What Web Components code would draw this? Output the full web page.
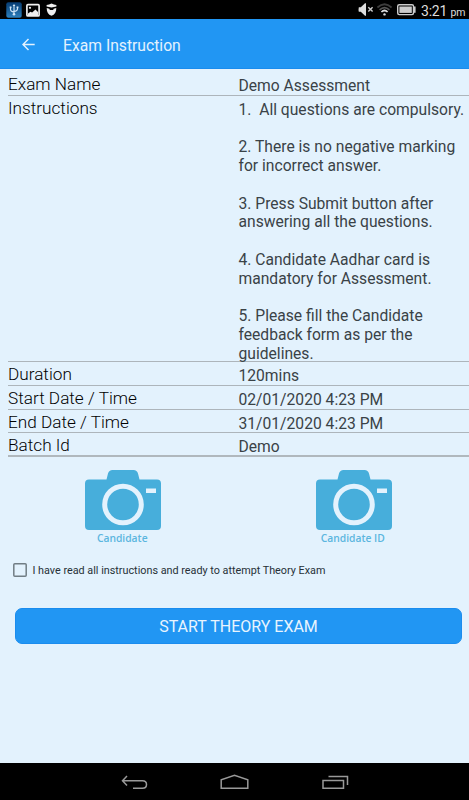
<!DOCTYPE html>
<html lang="en">
<head>
<meta charset="utf-8">
<title>Exam Instruction</title>
<style>
body {
  margin: 0;
  font-family: Roboto, "Noto Sans", sans-serif;
}
</style>
</head>
<body>
<exam-screen></exam-screen>

<script>
function define(name, html) {
  const template = document.createElement('template')
  template.innerHTML = html

  customElements.define(name, class extends HTMLElement {
    constructor() {
      super()
      this.attachShadow({ mode: 'open' }).appendChild(template.content.cloneNode(true))
    }
  })
}

define('status-bar', `
<style>
:host {
  display: flex;
  justify-content: space-between;
  height: 19px;
  background: #000;
  color: #ddd;
}
svg {
  display: block;
}
.right {
  display: flex;
}
.clock {
  width: 48px;
  font-size: 14px;
  line-height: 22px;
  letter-spacing: -0.2px;
  white-space: nowrap;
}
small {
  font-size: 10.5px;
}
</style>
<svg width="70" height="19" viewBox="0 0 70 19">
  <defs>
    <linearGradient id="usb" x2="0" y2="1">
      <stop stop-color="#063c72"/>
      <stop offset="1" stop-color="#2c80bd"/>
    </linearGradient>
  </defs>
  <rect x="6.3" y="2.3" width="15.4" height="15.4" rx="2" fill="url(#usb)"/>
  <path d="M14 5v9M10.5 7v2.5q0 2 3.5 2.5M17.5 7v2q0 2-3.5 2.5" fill="none" stroke="#cfe5f7" stroke-width="1.1"/>
  <path d="M12.6 6L14 4l1.4 2zM9.7 6.5h1.8v1.8H9.7zM16.6 6.5h1.8v1.8h-1.8z" fill="#cfe5f7"/>
  <circle cx="14" cy="14.2" r="1.3" fill="#cfe5f7"/>
  <rect x="26.9" y="4.7" width="12.2" height="11.2" rx="1" fill="none" stroke="#eee" stroke-width="1.7"/>
  <circle cx="30" cy="7.8" r="1.1" fill="#eee"/>
  <path d="M28 15v-1.5l2.5-1.7 1.6.8 3.4-3.1L38 12v3z" fill="#eee"/>
  <path d="M46.6 5l2.4-.6 2.5-1 2.5 1 2.4.6v1.4l-4.9 1.2-4.9-1.2z" fill="#eee"/>
  <path d="M46.7 8l2.6.7.6 1.2h3.2l.6-1.2 2.6-.7c.1 4-1.6 6.600-4.800 7.800-3.200-1.200-4.900-3.800-4.800-7.800z" fill="#eee"/>
</svg>
<div class="right">
  <svg width="65" height="19" viewBox="356 0 65 19">
    <path d="M358.8 7.2h2l4.2-4h1v12.6h-1l-4.2-4h-2q-.5-2.3 0-4.6z" fill="#ddd"/>
    <path d="M368.3 7.200l4.300 4.300m0-4.300l-4.300 4.300" stroke="#ccc" stroke-width="1.4"/>
    <g fill="none" stroke-width="1.7">
      <path d="M377.4 7.500q7.100-6.500 14.200 0" stroke="#3d3d3d"/>
      <path d="M379.6 9.800q4.900-4.500 9.800 0" stroke="#555"/>
      <path d="M381.4 12q3.100-3 6.200 0" stroke="#ddd"/>
    </g>
    <circle cx="384.5" cy="14.4" r="1.2" fill="#ddd"/>
    <rect x="397.7" y="4.8" width="15.8" height="9.8" rx="1.5" fill="none" stroke="#ccc" stroke-width="1.4"/>
    <rect x="399.4" y="6.5" width="12.4" height="6.4" fill="#ccc"/>
    <path d="M414 6.500h1.600v6.300H414z" fill="#ccc"/>
  </svg>
  <div class="clock">3:21 <small>pm</small></div>
</div>
`)

define('title-bar', `
<style>
:host {
  display: flex;
  align-items: center;
  height: 50px;
  padding-left: 22px;
  box-sizing: border-box;
  background: #2196f3;
  border-bottom: 1px solid #1a8cee;
  color: #e4f2fe;
}
svg {
  width: 13px;
  height: 13px;
  margin-top: 2px;
}
h1 {
  margin: 3px 0 0 28px;
  font-size: 15.7px;
  font-weight: 400;
}
</style>
<svg viewBox="0 0 13 13"><path d="M12.7 6.500H1M6.500 1L1 6.500 6.500 12" fill="none" stroke="currentColor" stroke-width="1.500"/></svg>
<h1><slot></slot></h1>
`)

define('info-row', `
<style>
:host {
  display: grid;
  grid-template-columns: 230.5px 1fr;
  box-sizing: border-box;
  height: var(--row-height, 23.7px);
  margin-left: 8px;
  padding-top: 2px;
  border-bottom: 1px solid #adb5bb;
}
.label {
  color: #000;
  font-size: 17.2px;
  font-weight: 300;
  line-height: 21.4px;
}
.value {
  color: #3a4247;
  font-size: 15.65px;
  line-height: 18.77px;
  padding-top: 3px;
  white-space: pre;
}
</style>
<div class="label"><slot name="label"></slot></div>
<div class="value"><slot></slot></div>
`)

define('photo-button', `
<style>
:host {
  display: flex;
  flex-direction: column;
  align-items: center;
  color: #5bb6df;
  font: 600 10.3px/12px "Open Sans", sans-serif;
}
svg {
  display: block;
  width: 76px;
  height: 61px;
}
span {
  margin: 1px 2px 0 0;
}
</style>
<svg viewBox="0 0 76 61">
  <path d="M4 9.5h17.5l1.5-6Q24 0 27.500 0h21q3.500 0 4.500 3.500l1.500 6H72q4 0 4 4V56q0 4-4 4H4q-4 0-4-4V13.500q0-4 4-4z" fill="#47aedb"/>
  <circle cx="38" cy="34.5" r="18.3" fill="none" stroke="#e3f2fd" stroke-width="5"/>
  <path d="M61 18.500h10v4.500H61z" fill="#e3f2fd"/>
</svg>
<span><slot></slot></span>
`)

define('agree-check', `
<style>
:host {
  display: flex;
  align-items: center;
  color: #263037;
  font-size: 10.8px;
}
svg {
  margin-right: 5.5px;
}
</style>
<svg width="14" height="14"><rect x=".8" y=".8" width="12.4" height="12.4" rx="1" fill="none" stroke="#717d84" stroke-width="1.5"/></svg>
<slot></slot>
`)

define('start-button', `
<style>
:host {
  display: block;
}
button {
  display: block;
  width: 100%;
  height: 36px;
  padding: 1px 0 0;
  border: 1px solid #1a8cee;
  border-radius: 7px;
  background: #2196f3;
  color: #e8f4fe;
  font: inherit;
  font-size: 16px;
}
</style>
<button><slot></slot></button>
`)

define('nav-bar', `
<style>
:host {
  display: flex;
  justify-content: center;
  height: 37px;
  background: #000;
}
</style>
<svg width="270" height="37" viewBox="100 763 270 37" fill="none" stroke="#999" stroke-width="1.5">
  <path d="M127 776l-4.500 4.700 4.500 4.700M123 780.700h19.500q4 0 4 3.800t-4 3.800H133"/>
  <path d="M221.200 788.200v-8.500l13.300-4.500 13.300 4.500v8.500z"/>
  <path d="M323 780.500h20.500v7.700H323zM328.500 776.500h19v8.500"/>
</svg>
`)

define('exam-screen', `
<style>
:host {
  display: flex;
  flex-direction: column;
  height: 800px;
  background: #e3f2fd;
}
main {
  flex: 1;
  padding-top: 3px;
}
.long {
  --row-height: 266.5px;
}
.last {
  border-bottom: 2px solid #b0b8bd;
}
.photos {
  display: grid;
  grid-template-columns: 1fr 1fr;
  padding: 12.8px 0 0 8px;
}
agree-check {
  margin: 19.5px 0 0 13px;
}
start-button {
  margin: 31px 7px 0 15px;
}
</style>
<status-bar></status-bar>
<title-bar>Exam Instruction</title-bar>
<main>
  <info-row><span slot="label">Exam Name</span>Demo Assessment</info-row>
  <info-row class="long"><span slot="label">Instructions</span>1.  All questions are compulsory.

2. There is no negative marking
for incorrect answer.

3. Press Submit button after
answering all the questions.

4. Candidate Aadhar card is
mandatory for Assessment.

5. Please fill the Candidate
feedback form as per the
guidelines.</info-row>
  <info-row><span slot="label">Duration</span>120mins</info-row>
  <info-row><span slot="label">Start Date / Time</span>02/01/2020 4:23 PM</info-row>
  <info-row><span slot="label">End Date / Time</span>31/01/2020 4:23 PM</info-row>
  <info-row class="last"><span slot="label">Batch Id</span>Demo</info-row>
  <div class="photos">
    <photo-button>Candidate</photo-button>
    <photo-button>Candidate ID</photo-button>
  </div>
  <agree-check>I have read all instructions and ready to attempt Theory Exam</agree-check>
  <start-button>START THEORY EXAM</start-button>
</main>
<nav-bar></nav-bar>
`)
</script>
</body>
</html>
